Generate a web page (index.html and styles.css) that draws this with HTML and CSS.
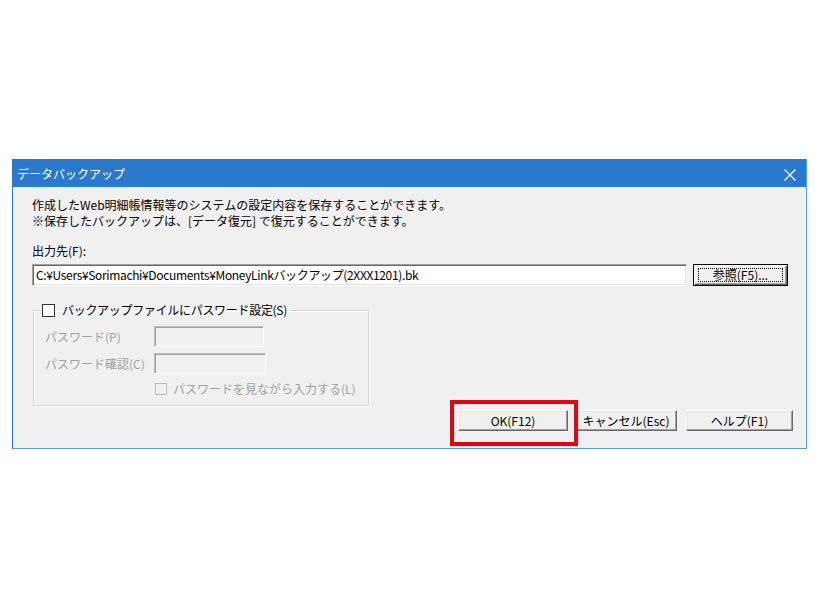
FILE: index.html
```html
<!DOCTYPE html>
<html lang="ja">
<head>
<meta charset="utf-8">
<title>データバックアップ</title>
<link rel="stylesheet" href="styles.css">
</head>
<body>
<div class="window">
  <div class="titlebar">
    <span class="title">データバックアップ</span>
    <svg class="close" width="12" height="12" viewBox="0 0 12 12"><path d="M0.5 0.5 L11.5 11.5 M11.5 0.5 L0.5 11.5" stroke="#fff" stroke-width="1.2" fill="none"/></svg>
  </div>
  <div class="client">
    <p class="desc">作成したWeb明細帳情報等のシステムの設定内容を保存することができます。<br>※保存したバックアップは、[データ復元] で復元することができます。</p>
    <div class="label">出力先(F):</div>
    <div class="path-row">
      <div class="textbox path">C:¥Users¥Sorimachi¥Documents¥MoneyLinkバックアップ(2XXX1201).bk</div>
      <button class="btn btn-default"><span class="focus">参照(F5)...</span></button>
    </div>
    <fieldset class="group">
      <legend class="legend"><span class="chk"></span>バックアップファイルにパスワード設定(S)</legend>
      <div class="field"><span class="flabel">パスワード(P)</span><span class="textbox disabled pw1"></span></div>
      <div class="field field2"><span class="flabel">パスワード確認(C)</span><span class="textbox disabled pw2"></span></div>
      <div class="showpw"><span class="chk chk-disabled"></span>パスワードを見ながら入力する(L)</div>
    </fieldset>
    <div class="actions">
      <div class="ok-wrap">
        <button class="btn btn-ok">OK(F12)</button>
        <span class="highlight"></span>
      </div>
      <button class="btn btn-cancel">キャンセル(Esc)</button>
      <button class="btn btn-help">ヘルプ(F1)</button>
    </div>
  </div>
</div>
</body>
</html>
```

FILE: styles.css
```css
* { box-sizing: border-box; }
html, body { margin: 0; padding: 0; background: #fff; }
body {
  font-family: "Noto Sans CJK JP", "Noto Sans", sans-serif;
  font-size: 12px;
  color: #000;
}
.window {
  margin: 159px 0 0 12px;
  width: 795px;
  height: 290px;
  border: 1px solid #2b79cd;
  border-bottom-color: #5b9de0;
  border-right-color: #5b9de0;
  background: #f0f0f0;
  display: flex;
  flex-direction: column;
}
.titlebar {
  height: 27px;
  background: #2b79cd;
  color: #fff;
  display: flex;
  align-items: center;
  justify-content: space-between;
  padding: 0 10px 0 4px;
  flex: none;
}
.title { font-size: 12px; line-height: 16px; margin-top: 1px; }
.close { display: block; margin-top: 2px; }
.client {
  flex: 1;
  padding: 10px 13px 0 19px;
  display: flex;
  flex-direction: column;
}
.desc { margin: 0; line-height: 16px; }
.label { margin-top: 14px; line-height: 16px; }
.path-row {
  margin-top: 5px;
  display: flex;
  gap: 6px;
  align-items: flex-start;
}
.textbox {
  display: block;
  height: 22px;
  background: #fff;
  border: 1px solid;
  border-color: #a0a0a0 #fff #fff #a0a0a0;
  box-shadow: inset 1px 1px 0 #696969, inset -1px -1px 0 #e3e3e3;
}
.path {
  width: 655px;
  padding: 0 3px;
  line-height: 20px;
  white-space: nowrap;
  overflow: hidden;
  letter-spacing: -0.35px;
}
.btn {
  font-family: inherit;
  font-size: 12px;
  color: #000;
  background: #f0f0f0;
  height: 21px;
  border: 1px solid;
  border-color: #fff #696969 #696969 #fff;
  box-shadow: inset -1px -1px 0 #a0a0a0, inset 1px 1px 0 #e3e3e3;
  padding: 0;
  line-height: 17px;
  margin: 0;
}
.btn-default {
  width: 95px;
  height: 22px;
  border: 1px solid #000;
  box-shadow: inset 1px 1px 0 #fff, inset -1px -1px 0 #696969, inset -2px -2px 0 #a0a0a0;
  padding: 3px 4px;
}
.focus {
  display: block;
  height: 14px;
  line-height: 12px;
  border: 1px dotted #000;
}
.group {
  margin: 16px 0 0 1px;
  width: 336px;
  padding: 8px 0 8px 11px;
  border: 1px solid #d5d5d5;
  box-shadow: inset 1px 1px 0 #fff, 1px 1px 0 #fff;
  min-width: 0;
}
.legend {
  padding: 0 4px 0 0;
  margin-left: -3px;
  line-height: 16px;
  display: flex;
  align-items: center;
  letter-spacing: -0.3px;
}
.chk {
  display: inline-block;
  width: 13px;
  height: 13px;
  background: #fff;
  border: 1px solid #333;
  margin-right: 7px;
  flex: none;
}
.chk-disabled {
  background: #f0f0f0;
  border-color: #bcbcbc;
  width: 12px;
  height: 12px;
  margin-right: 6px;
}
.field {
  display: flex;
  align-items: center;
  color: #a0a0a0;
  height: 21px;
}
.field2 { margin-top: 6px; }
.flabel { width: 109px; line-height: 16px; }
.disabled {
  background: #f0f0f0;
  height: 21px;
  border-color: #bcbcbc #fff #fff #bcbcbc;
  box-shadow: inset 1px 1px 0 #a0a0a0;
}
.pw1 { width: 110px; }
.pw2 { width: 112px; }
.showpw {
  margin: 7px 0 0 110px;
  display: flex;
  align-items: center;
  line-height: 16px;
  color: #a0a0a0;
}
.actions {
  margin-top: 4px;
  display: flex;
  justify-content: flex-end;
  align-items: flex-start;
}
.ok-wrap { position: relative; }
.btn-ok { width: 110px; display: block; }
.btn-cancel { width: 102px; margin-left: 7px; }
.btn-help { width: 107px; margin-left: 9px; }
.highlight {
  position: absolute;
  left: -8px;
  top: -10px;
  width: 128px;
  height: 46px;
  border: 4px solid #e60012;
  pointer-events: none;
}
```
